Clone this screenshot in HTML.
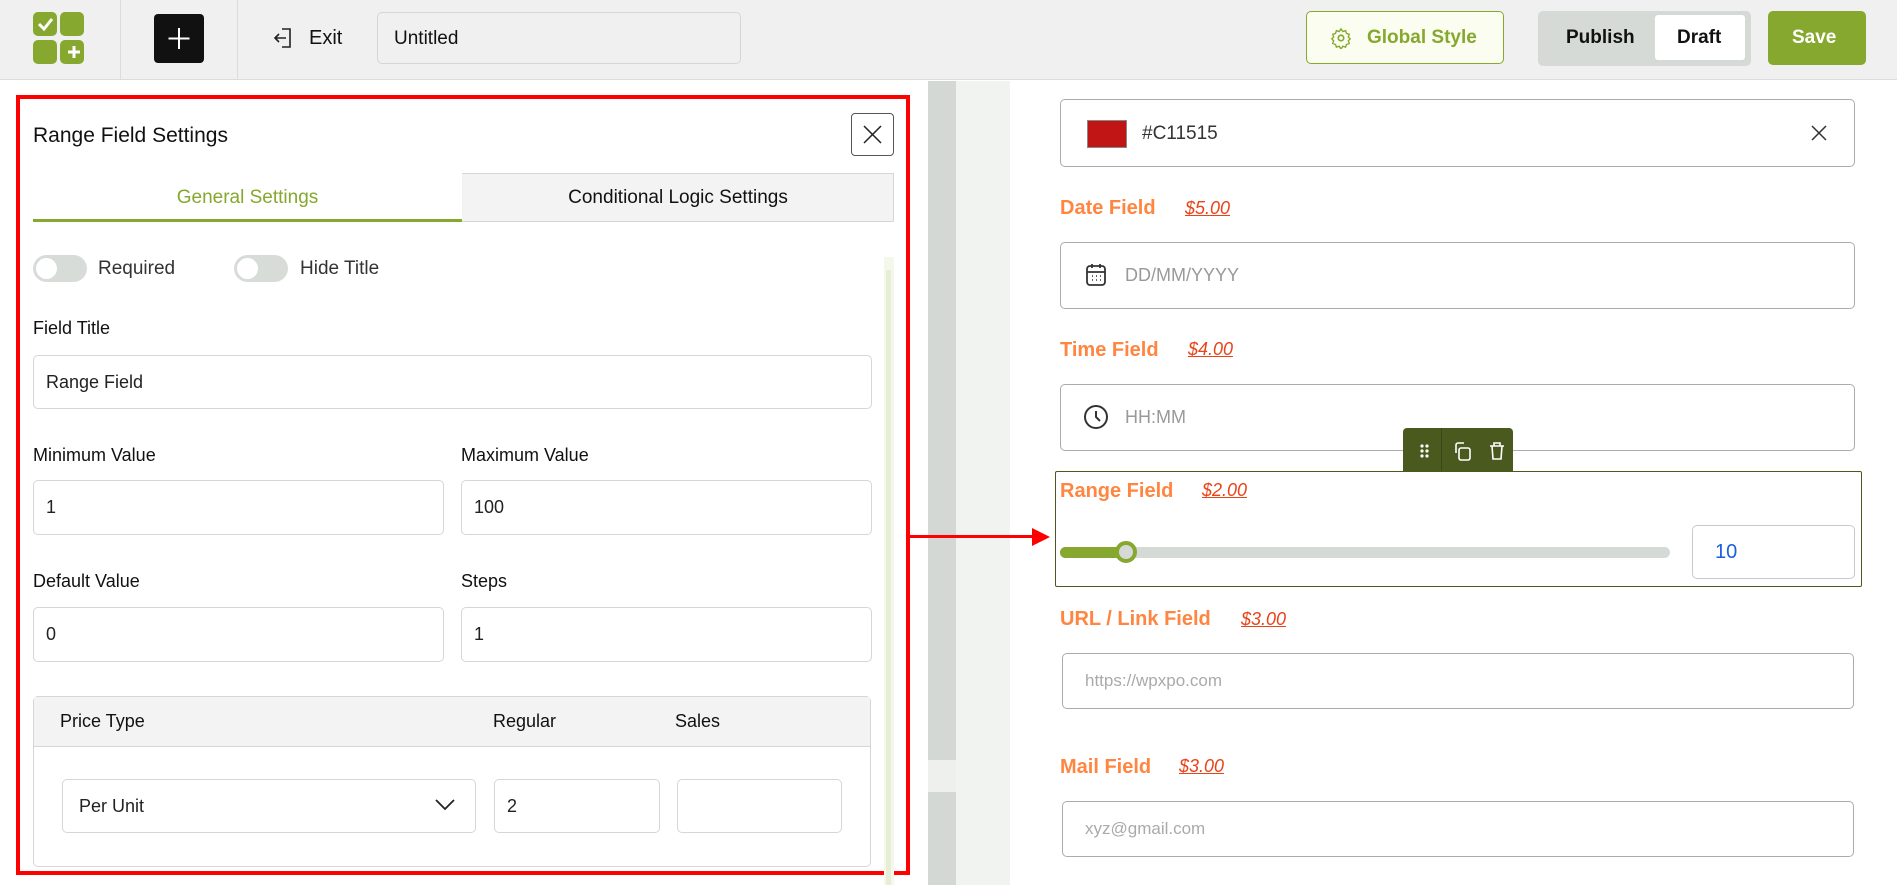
<!DOCTYPE html>
<html><head><meta charset="utf-8"><style>
*{box-sizing:border-box;margin:0;padding:0}
body{width:1897px;height:885px;overflow:hidden;background:#fff;font-family:"Liberation Sans",sans-serif;color:#111;position:relative}
.a{position:absolute}
.inp{position:absolute;border:1px solid #d6d6d6;border-radius:5px;background:#fff;font-size:18px;display:flex;align-items:center;padding-left:12px;color:#222}
.lbl{position:absolute;font-size:18px;color:#111}
.rin{position:absolute;border:1.5px solid #a9ada9;border-radius:5px;background:#fff;font-size:18px;display:flex;align-items:center;color:#999}
.fl{position:absolute;font-size:20px;font-weight:600;color:#ff8540}
.pr{position:absolute;font-size:18px;font-style:italic;color:#e8441a;text-decoration:underline}
</style></head><body>
<div class="a" style="left:0;top:0;width:1897px;height:80px;background:#f0f0f0;border-bottom:1px solid #dcdcdc"></div>
<div class="a" style="left:33px;top:12px;width:24px;height:24px;background:#86a82e;border-radius:5px"></div>
<div class="a" style="left:60px;top:12px;width:24px;height:24px;background:#86a82e;border-radius:5px"></div>
<div class="a" style="left:33px;top:40px;width:24px;height:24px;background:#86a82e;border-radius:5px"></div>
<div class="a" style="left:60px;top:40px;width:24px;height:24px;background:#86a82e;border-radius:5px"></div>
<svg class="a" style="left:33px;top:12px" width="52" height="52"><path d="M6 12l5 5 8-10" stroke="#fff" stroke-width="3" fill="none"/><path d="M41 34v12M35 40h12" stroke="#fff" stroke-width="3"/></svg>
<div class="a" style="left:120px;top:0;width:1px;height:80px;background:#dcdcdc"></div>
<div class="a" style="left:154px;top:14px;width:50px;height:49px;background:#111;border-radius:4px"></div>
<svg class="a" style="left:154px;top:14px" width="50" height="49"><path d="M25 14v21M14.5 24.5h21" stroke="#fff" stroke-width="2"/></svg>
<div class="a" style="left:237px;top:0;width:1px;height:80px;background:#dcdcdc"></div>
<svg class="a" style="left:272px;top:26px" width="24" height="24"><path d="M10 3h8v18h-8M14 12H3m4-4l-4 4 4 4" stroke="#222" stroke-width="1.6" fill="none"/></svg>
<div class="a" style="left:309px;top:27px;font-size:20px">Exit</div>
<div class="a" style="left:377px;top:12px;width:364px;height:52px;border:1px solid #d6d6d6;border-radius:5px;background:#f0f0f0;font-size:19px;padding:15px 0 0 16px">Untitled</div>
<div class="a" style="left:1306px;top:11px;width:198px;height:53px;border:1px solid #86a82e;border-radius:5px;background:#fafdf0;color:#86a82e;font-size:19px;font-weight:bold;padding:15px 0 0 60px">Global Style</div>
<svg class="a" style="left:1330px;top:27px" width="22" height="22" viewBox="0 0 24 24"><circle cx="12" cy="12" r="3" stroke="#86a82e" stroke-width="1.8" fill="none"/><path d="M12 2l2 3 3-1 1 3 3 1-1 3 2 2-2 2 1 3-3 1-1 3-3-1-2 3-2-3-3 1-1-3-3-1 1-3-2-2 2-2-1-3 3-1 1-3 3 1z" stroke="#86a82e" stroke-width="1.5" fill="none"/></svg>
<div class="a" style="left:1538px;top:11px;width:213px;height:55px;background:#d6dad6;border-radius:5px"></div>
<div class="a" style="left:1566px;top:27px;font-size:19px;font-weight:bold;color:#111">Publish</div>
<div class="a" style="left:1655px;top:15px;width:90px;height:45px;background:#fff;border-radius:3px;font-size:19px;font-weight:bold;padding:12px 0 0 22px">Draft</div>
<div class="a" style="left:1768px;top:11px;width:98px;height:54px;background:#86a82e;border-radius:5px;color:#fff;font-size:19px;font-weight:bold;padding:16px 0 0 24px">Save</div>
<div class="a" style="left:928px;top:81px;width:28px;height:804px;background:#d4d8d4"></div>
<div class="a" style="left:928px;top:760px;width:28px;height:32px;background:#eef0ee"></div>
<div class="a" style="left:956px;top:81px;width:54px;height:804px;background:#f1f3f1"></div>
<div class="a" style="left:16px;top:95px;width:894px;height:780px;border:4px solid #f00"></div>
<div class="a" style="left:33px;top:124px;font-size:21px">Range Field Settings</div>
<div class="a" style="left:851px;top:113px;width:43px;height:43px;border:1px solid #555;border-radius:4px"></div>
<svg class="a" style="left:851px;top:113px" width="43" height="43"><path d="M13 13l17 17M30 13L13 30" stroke="#222" stroke-width="1.5"/></svg>
<div class="a" style="left:33px;top:173px;width:861px;height:49px;border:1px solid #d6d6d6;background:#f2f3f2"></div>
<div class="a" style="left:33px;top:173px;width:429px;height:49px;background:#fff;border-bottom:3px solid #86a82e;color:#86a82e;font-size:19px;text-align:center;padding-top:14px">General Settings</div>
<div class="a" style="left:462px;top:187px;width:432px;text-align:center;font-size:19px">Conditional Logic Settings</div>
<div class="a" style="left:884px;top:257px;width:10px;height:628px;background:#f4f8ea"></div>
<div class="a" style="left:886px;top:270px;width:5px;height:615px;background:#e6efd6"></div>
<div class="a" style="left:33px;top:255px;width:54px;height:27px;border-radius:14px;background:#d8dcd8"></div>
<div class="a" style="left:36px;top:258px;width:21px;height:21px;border-radius:50%;background:#fff"></div>
<div class="a" style="left:98px;top:258px;font-size:19px;color:#333">Required</div>
<div class="a" style="left:234px;top:255px;width:54px;height:27px;border-radius:14px;background:#d8dcd8"></div>
<div class="a" style="left:237px;top:258px;width:21px;height:21px;border-radius:50%;background:#fff"></div>
<div class="a" style="left:300px;top:258px;font-size:19px;color:#333">Hide Title</div>
<div class="lbl" style="left:33px;top:318px">Field Title</div>
<div class="inp" style="left:33px;top:355px;width:839px;height:54px">Range Field</div>
<div class="lbl" style="left:33px;top:445px">Minimum Value</div>
<div class="lbl" style="left:461px;top:445px">Maximum Value</div>
<div class="inp" style="left:33px;top:480px;width:411px;height:55px">1</div>
<div class="inp" style="left:461px;top:480px;width:411px;height:55px">100</div>
<div class="lbl" style="left:33px;top:571px">Default Value</div>
<div class="lbl" style="left:461px;top:571px">Steps</div>
<div class="inp" style="left:33px;top:607px;width:411px;height:55px">0</div>
<div class="inp" style="left:461px;top:607px;width:411px;height:55px">1</div>
<div class="a" style="left:33px;top:696px;width:838px;height:171px;border:1px solid #d6d6d6;border-radius:5px"></div>
<div class="a" style="left:34px;top:697px;width:836px;height:50px;background:#f2f3f2;border-bottom:1px solid #d6d6d6"></div>
<div class="lbl" style="left:60px;top:711px">Price Type</div>
<div class="lbl" style="left:493px;top:711px">Regular</div>
<div class="lbl" style="left:675px;top:711px">Sales</div>
<div class="inp" style="left:62px;top:779px;width:414px;height:54px;padding-left:16px">Per Unit</div>
<svg class="a" style="left:434px;top:797px" width="22" height="16"><path d="M2 3l9 9 9-9" stroke="#222" stroke-width="1.8" fill="none"/></svg>
<div class="inp" style="left:494px;top:779px;width:166px;height:54px">2</div>
<div class="inp" style="left:677px;top:779px;width:165px;height:54px"></div>
<div class="a" style="left:910px;top:535px;width:126px;height:3px;background:#f00"></div>
<svg class="a" style="left:1032px;top:528px" width="18" height="18"><path d="M0 0L18 9L0 18z" fill="#f00"/></svg>
<div class="rin" style="left:1060px;top:99px;width:795px;height:68px"></div>
<div class="a" style="left:1087px;top:120px;width:40px;height:28px;background:#c11515;border:1px solid #888"></div>
<div class="a" style="left:1142px;top:123px;font-size:19px;color:#333">#C11515</div>
<svg class="a" style="left:1810px;top:124px" width="18" height="18"><path d="M2 2l14 14M16 2L2 16" stroke="#333" stroke-width="1.5"/></svg>
<div class="fl" style="left:1060px;top:197px">Date Field</div><div class="pr" style="left:1185px;top:198px">$5.00</div>
<div class="rin" style="left:1060px;top:242px;width:795px;height:67px;padding-left:64px">DD/MM/YYYY</div>
<svg class="a" style="left:1084px;top:262px" width="24" height="26"><rect x="3" y="4" width="18" height="19" rx="3" stroke="#333" stroke-width="1.8" fill="none"/><path d="M3 10h18M8 2v4M16 2v4" stroke="#333" stroke-width="1.8"/><path d="M8 14h1M12 14h1M16 14h1M8 18h1M12 18h1M16 18h1" stroke="#333" stroke-width="1.5"/></svg>
<div class="fl" style="left:1060px;top:339px">Time Field</div><div class="pr" style="left:1188px;top:339px">$4.00</div>
<div class="rin" style="left:1060px;top:384px;width:795px;height:67px;padding-left:64px">HH:MM</div>
<svg class="a" style="left:1083px;top:404px" width="26" height="26"><circle cx="13" cy="13" r="11" stroke="#333" stroke-width="2" fill="none"/><path d="M13 7v6l4 4" stroke="#333" stroke-width="2" fill="none"/></svg>
<div class="a" style="left:1403px;top:428px;width:110px;height:44px;background:#4a5a1f;border-radius:4px 4px 0 0"></div>
<div class="a" style="left:1441px;top:428px;width:1px;height:44px;background:#3a4816"></div>
<svg class="a" style="left:1410px;top:440px" width="100" height="24"><g fill="#fff"><circle cx="12" cy="6" r="1.6"/><circle cx="17" cy="6" r="1.6"/><circle cx="12" cy="11" r="1.6"/><circle cx="17" cy="11" r="1.6"/><circle cx="12" cy="16" r="1.6"/><circle cx="17" cy="16" r="1.6"/></g><g stroke="#fff" stroke-width="1.6" fill="none"><path d="M46 13V5a2 2 0 0 1 2-2h6"/><rect x="49" y="8" width="11" height="12" rx="2"/><path d="M80 6h14M84 6V3h6v3M82 6l1 13h8l1-13"/></g></svg>
<div class="a" style="left:1055px;top:471px;width:807px;height:116px;border:1.5px solid #4a5a1f;border-radius:2px"></div>
<div class="fl" style="left:1060px;top:480px">Range Field</div><div class="pr" style="left:1202px;top:480px">$2.00</div>
<div class="a" style="left:1060px;top:547px;width:610px;height:11px;border-radius:6px;background:#d6dad6"></div>
<div class="a" style="left:1060px;top:547px;width:66px;height:11px;border-radius:6px;background:#86a82e"></div>
<div class="a" style="left:1115px;top:541px;width:22px;height:22px;border-radius:50%;background:#d6dad6;border:4px solid #86a82e"></div>
<div class="rin" style="left:1692px;top:525px;width:163px;height:54px;padding-left:22px;color:#1a5fe0;font-size:20px;border-color:#c8cac8">10</div>
<div class="fl" style="left:1060px;top:608px">URL / Link Field</div><div class="pr" style="left:1241px;top:609px">$3.00</div>
<div class="rin" style="left:1062px;top:653px;width:792px;height:56px;padding-left:22px;font-size:17px;color:#aaa">https://wpxpo.com</div>
<div class="fl" style="left:1060px;top:756px">Mail Field</div><div class="pr" style="left:1179px;top:756px">$3.00</div>
<div class="rin" style="left:1062px;top:801px;width:792px;height:56px;padding-left:22px;font-size:17px;color:#aaa">xyz@gmail.com</div>
</body></html>
